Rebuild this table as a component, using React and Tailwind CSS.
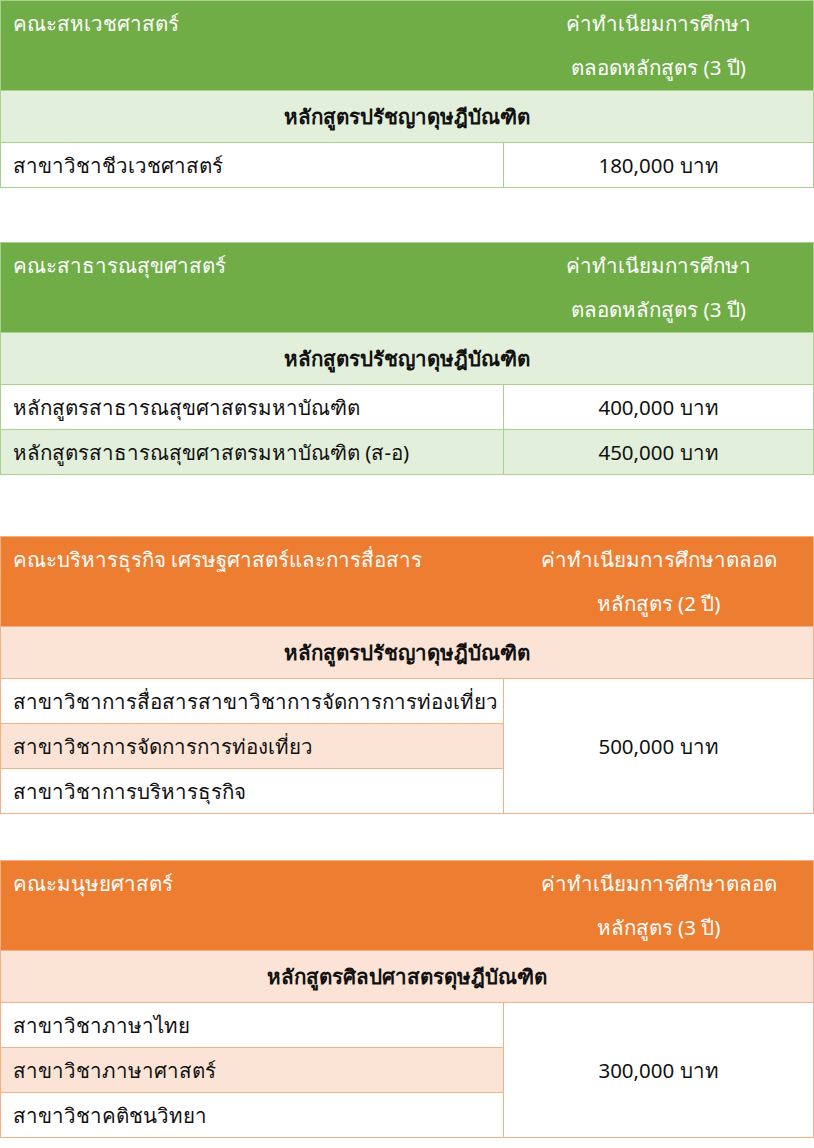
const tables = [
  {
    theme: "green",
    faculty: "คณะสหเวชศาสตร์",
    fee: ["ค่าทำเนียมการศึกษา", "ตลอดหลักสูตร (3 ปี)"],
    program: "หลักสูตรปรัชญาดุษฎีบัณฑิต",
    rows: [{ name: "สาขาวิชาชีวเวชศาสตร์", price: "180,000 บาท" }],
    spacing: "",
  },
  {
    theme: "green",
    faculty: "คณะสาธารณสุขศาสตร์",
    fee: ["ค่าทำเนียมการศึกษา", "ตลอดหลักสูตร (3 ปี)"],
    program: "หลักสูตรปรัชญาดุษฎีบัณฑิต",
    rows: [
      { name: "หลักสูตรสาธารณสุขศาสตรมหาบัณฑิต", price: "400,000 บาท" },
      { name: "หลักสูตรสาธารณสุขศาสตรมหาบัณฑิต (ส-อ)", price: "450,000 บาท" },
    ],
    spacing: "mt-[54px]",
  },
  {
    theme: "orange",
    faculty: "คณะบริหารธุรกิจ เศรษฐศาสตร์และการสื่อสาร",
    fee: ["ค่าทำเนียมการศึกษาตลอด", "หลักสูตร (2 ปี)"],
    program: "หลักสูตรปรัชญาดุษฎีบัณฑิต",
    rows: [
      { name: "สาขาวิชาการสื่อสารสาขาวิชาการจัดการการท่องเที่ยว" },
      { name: "สาขาวิชาการจัดการการท่องเที่ยว" },
      { name: "สาขาวิชาการบริหารธุรกิจ" },
    ],
    shared: "500,000 บาท",
    spacing: "mt-[61px]",
  },
  {
    theme: "orange",
    faculty: "คณะมนุษยศาสตร์",
    fee: ["ค่าทำเนียมการศึกษาตลอด", "หลักสูตร (3 ปี)"],
    program: "หลักสูตรศิลปศาสตรดุษฎีบัณฑิต",
    rows: [
      { name: "สาขาวิชาภาษาไทย" },
      { name: "สาขาวิชาภาษาศาสตร์" },
      { name: "สาขาวิชาคติชนวิทยา" },
    ],
    shared: "300,000 บาท",
    spacing: "mt-[46px]",
  },
];

const themes = {
  green: {
    head: "bg-[#70ad47]",
    band: "bg-[#e2efda]",
    line: "border-[#a9d08e]",
  },
  orange: {
    head: "bg-[#ed7d31]",
    band: "bg-[#fbe4d5]",
    line: "border-[#f4b183]",
  },
};

function FeeTable({ data }) {
  const t = themes[data.theme];

  return (
    <div className={`${data.spacing} grid grid-cols-[503px_1fr] border-l border-t ${t.line}`}>
      {/* Header */}
      <div className={`${t.head} h-[89px] pl-3 text-white leading-[44px] whitespace-nowrap`}>{data.faculty}</div>
      <div className={`${t.head} h-[89px] border-r ${t.line} text-center text-white leading-[44px]`}>
        {data.fee.map((line, i) => (
          <div key={i}>{line}</div>
        ))}
      </div>

      {/* Program band */}
      <div
        className={`col-span-2 h-[53px] ${t.band} border-t border-r border-b ${t.line} flex items-center justify-center font-bold`}
      >
        {data.program}
      </div>

      {/* Rows */}
      {data.rows.map((row, i) => (
        <div key={i} className="contents">
          <div
            className={`h-[45px] border-r border-b ${t.line} pl-3 flex items-center whitespace-nowrap overflow-hidden ${
              i % 2 === 1 ? t.band : "bg-white"
            }`}
          >
            {row.name}
          </div>
          {!data.shared && (
            <div
              className={`h-[45px] border-r border-b ${t.line} flex items-center justify-center ${
                i % 2 === 1 ? t.band : "bg-white"
              }`}
            >
              {row.price}
            </div>
          )}
          {data.shared && i === 0 && (
            <div className={`row-span-3 border-r border-b ${t.line} bg-white flex items-center justify-center`}>
              {data.shared}
            </div>
          )}
        </div>
      ))}
    </div>
  );
}

export default function App() {
  return (
    <div className="w-[814px] bg-white text-[20.5px] text-[#111] font-['Noto_Sans','Liberation_Sans',sans-serif]">
      {tables.map((tbl, i) => (
        <FeeTable key={i} data={tbl} />
      ))}
    </div>
  );
}
